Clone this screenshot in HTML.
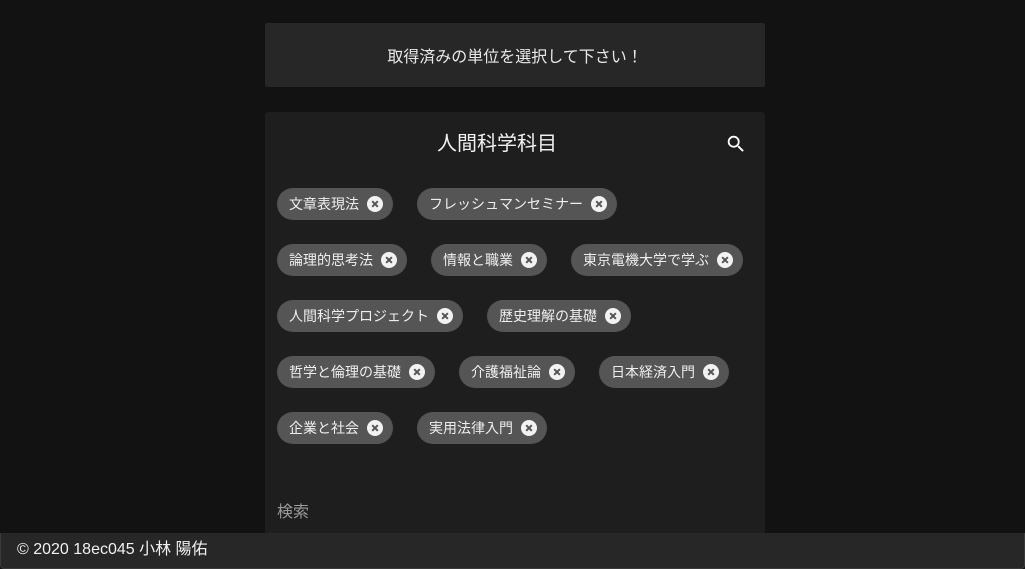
<!DOCTYPE html>
<html><head><meta charset="utf-8"><style>
*{box-sizing:border-box;margin:0;padding:0}
body{width:1025px;height:569px;overflow:hidden;background:#121212;font-family:"Liberation Sans","Noto Sans CJK JP",sans-serif;color:#fff;position:relative}
.top{position:absolute;left:265px;top:23px;width:500px;height:64px;background:#272727;border-radius:2px;display:flex;align-items:center;justify-content:center;font-size:16px;color:#e8e8e8}
.card{position:absolute;left:265px;top:112px;width:500px;height:440px;background:#1e1e1e;border-radius:4px}
.title{position:absolute;top:18px;left:172px;font-size:20px;line-height:28px;color:#f0f0f0}
.search{position:absolute;left:460px;top:21px}
.chips{position:absolute;left:12px;top:64px;width:478px;display:flex;flex-wrap:wrap;column-gap:24px}
.chip{height:32px;margin:12px 0;background:#555;border-radius:16px;display:flex;align-items:center;padding:0 10px 0 12px;font-size:14px;color:#eee}
.x{width:16px;height:16px;border-radius:50%;background:#f2f2f2;margin-left:8px;position:relative}
.x:before,.x:after{content:"";position:absolute;left:7px;top:4px;width:2px;height:8px;background:#555;transform:rotate(45deg)}
.x:after{transform:rotate(-45deg)}
.kw{position:absolute;left:12px;top:386px;font-size:16px;color:#9a9a9a}
.foot{position:absolute;left:0;top:533px;width:1025px;height:36px;background:#272727;border:1px solid #3a3a3a;border-top:none;border-radius:0 0 4px 4px;padding-left:16px;font-size:16px;line-height:34px;color:#f0f0f0}
</style></head><body>
<div class="top">取得済みの単位を選択して下さい！</div>
<div class="card">
<div class="title">人間科学科目</div>
<svg class="search" width="22" height="22" viewBox="0 0 24 24"><path fill="#fff" d="M15.5 14h-.79l-.28-.27A6.470 6.470 0 0 0 16 9.5 6.5 6.5 0 1 0 9.5 16c1.61 0 3.090-.59 4.230-1.570l.27.28v.79l5 4.990L20.490 19l-4.990-5zm-6 0C7.010 14 5 11.990 5 9.5S7.010 5 9.5 5 14 7.010 14 9.5 11.990 14 9.5 14z"/></svg>
<div class="chips">
<div class="chip">文章表現法<span class="x"></span></div>
<div class="chip">フレッシュマンセミナー<span class="x"></span></div>
<div class="chip">論理的思考法<span class="x"></span></div>
<div class="chip">情報と職業<span class="x"></span></div>
<div class="chip">東京電機大学で学ぶ<span class="x"></span></div>
<div class="chip">人間科学プロジェクト<span class="x"></span></div>
<div class="chip">歴史理解の基礎<span class="x"></span></div>
<div class="chip">哲学と倫理の基礎<span class="x"></span></div>
<div class="chip">介護福祉論<span class="x"></span></div>
<div class="chip">日本経済入門<span class="x"></span></div>
<div class="chip">企業と社会<span class="x"></span></div>
<div class="chip">実用法律入門<span class="x"></span></div>
</div>
<div class="kw">検索</div>
</div>
<div class="foot">© 2020 18ec045 小林 陽佑</div>
</body></html>
